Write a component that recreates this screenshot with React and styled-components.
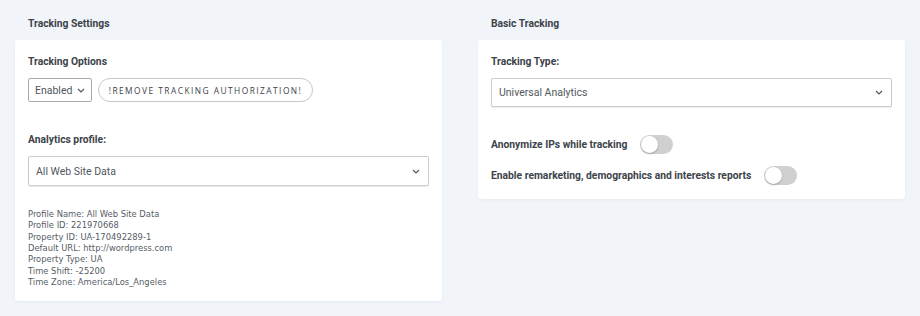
import React, { useState } from 'react';
import styled, { createGlobalStyle } from 'styled-components';

const GlobalStyle = createGlobalStyle`
  html, body {
    margin: 0;
    padding: 0;
    background: #f1f4f9;
  }
  body {
    font-family: Roboto, "Liberation Sans", sans-serif;
  }
`;

const Page = styled.div`
  display: grid;
  grid-template-columns: 427px 427px;
  column-gap: 36px;
  align-items: start;
  padding: 17px 0 0 15px;
  width: 920px;
  height: 316px;
  box-sizing: border-box;
`;

const Column = styled.section`
  display: flex;
  flex-direction: column;
`;

const SectionTitle = styled.h2`
  margin: 0 0 9px 13px;
  font-size: 10.3px;
  line-height: 14px;
  font-weight: 700;
  color: #3c434a;
`;

const Card = styled.div`
  background: #fff;
  border-radius: 3px;
  box-shadow: 0 1px 3px rgba(30, 40, 70, 0.05);
  padding: 15px 13px ${p => p.$bottom || 13}px;
`;

const Label = styled.div`
  font-size: 10.3px;
  line-height: 14px;
  font-weight: 700;
  color: #3c434a;
  margin: ${p => p.$top || 0}px 0 9px;
`;

const Row = styled.div`
  display: flex;
  align-items: center;
  gap: 6px;
`;

const SelectBox = styled.div`
  display: flex;
  align-items: center;
  justify-content: space-between;
  box-sizing: border-box;
  flex: none;
  width: ${p => p.$width || '100%'};
  height: ${p => p.$height || 29}px;
  padding: 0 ${p => p.$padRight || 8}px 0 ${p => p.$padLeft || 7}px;
  border: 1px solid ${p => (p.$light ? '#c9ccd1' : '#a7aaad')};
  border-radius: 2px;
  box-shadow: ${p => (p.$light ? '0 1px 1px rgba(0,0,0,0.08)' : 'none')};
  background: #fff;
  font-size: 10.5px;
  color: #50575e;
`;

const Chevron = () => (
  <svg width="8" height="5" viewBox="0 0 8 5">
    <path d="M1 1 L4 4 L7 1" fill="none" stroke="#50575e" strokeWidth="1.2" />
  </svg>
);

const PillButton = styled.button`
  flex: none;
  height: 24px;
  width: 215px;
  padding: 0;
  border: 1px solid #c3c7cf;
  border-radius: 12px;
  background: #fff;
  font-family: "Open Sans", "Liberation Sans", sans-serif;
  font-size: 8.4px;
  font-weight: 400;
  letter-spacing: 1.45px;
  color: #3c434a;
  cursor: pointer;
`;

const InfoList = styled.div`
  margin-top: 22px;
  font-family: "DejaVu Sans Condensed", "DejaVu Sans", Verdana, sans-serif;
  font-size: 9.3px;
  line-height: 11.35px;
  color: #555d66;
`;

const ToggleRow = styled.div`
  display: flex;
  align-items: center;
  gap: 13px;
  margin-top: ${p => p.$top}px;
  font-size: 10.3px;
  font-weight: 700;
  color: #3c434a;
`;

const Track = styled.button`
  position: relative;
  width: 33px;
  height: 19px;
  padding: 0;
  border: none;
  border-radius: 10px;
  background: ${p => (p.$on ? '#2271b1' : '#d0d0d0')};
  cursor: pointer;
`;

const Thumb = styled.span`
  position: absolute;
  top: 1px;
  left: ${p => (p.$on ? 15 : 1)}px;
  width: 17px;
  height: 17px;
  border-radius: 50%;
  background: #fff;
  box-shadow: 0 1px 2px rgba(0, 0, 0, 0.25);
`;

const Toggle = ({ initial = false }) => {
  const [on, setOn] = useState(initial);
  return (
    <Track $on={on} onClick={() => setOn(!on)}>
      <Thumb $on={on} />
    </Track>
  );
};

const profile = [
  'Profile Name: All Web Site Data',
  'Profile ID: 221970668',
  'Property ID: UA-170492289-1',
  'Default URL: http://wordpress.com',
  'Property Type: UA',
  'Time Shift: -25200',
  'Time Zone: America/Los_Angeles',
];

const App = () => (
  <>
    <GlobalStyle />
    <Page>
      <Column>
        <SectionTitle>Tracking Settings</SectionTitle>
        <Card $bottom={14}>
          <Label>Tracking Options</Label>
          <Row>
            <SelectBox $width="64px" $height={24} $padLeft={6} $padRight={6}>
              Enabled <Chevron />
            </SelectBox>
            <PillButton>!REMOVE TRACKING AUTHORIZATION!</PillButton>
          </Row>
          <Label $top={31}>Analytics profile:</Label>
          <SelectBox $light $height={30}>
            All Web Site Data <Chevron />
          </SelectBox>
          <InfoList>
            {profile.map(line => (
              <div key={line}>{line}</div>
            ))}
          </InfoList>
        </Card>
      </Column>
      <Column>
        <SectionTitle>Basic Tracking</SectionTitle>
        <Card $bottom={14}>
          <Label>Tracking Type:</Label>
          <SelectBox $light $height={29}>
            Universal Analytics <Chevron />
          </SelectBox>
          <ToggleRow $top={28}>
            Anonymize IPs while tracking <Toggle />
          </ToggleRow>
          <ToggleRow $top={12}>
            Enable remarketing, demographics and interests reports <Toggle />
          </ToggleRow>
        </Card>
      </Column>
    </Page>
  </>
);

export default App;
